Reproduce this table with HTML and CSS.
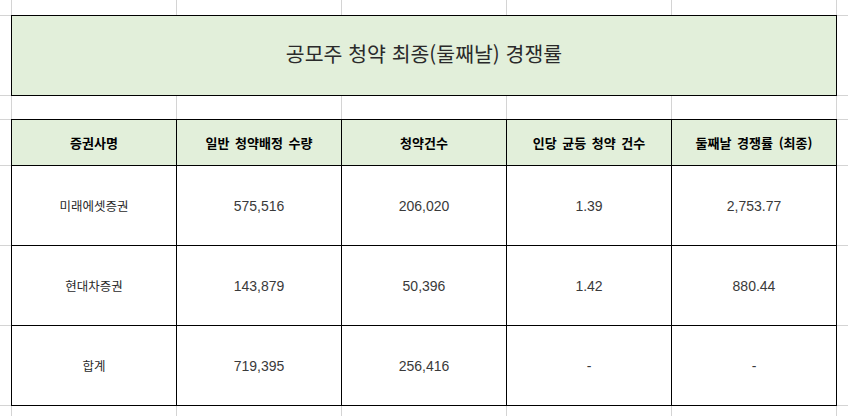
FILE: index.html
```html
<!DOCTYPE html>
<html lang="ko">
<head>
<meta charset="utf-8">
<title>공모주 청약 경쟁률</title>
<link rel="stylesheet" href="styles.css">
</head>
<body>
<div class="sheet">
  <div class="c"></div><div class="c"></div><div class="c"></div><div class="c"></div><div class="c"></div><div class="c"></div><div class="c"></div>

  <div class="c"></div>
  <div class="c title">공모주 청약 최종(둘째날) 경쟁률</div>
  <div class="c"></div>

  <div class="c"></div><div class="c"></div><div class="c"></div><div class="c"></div><div class="c"></div><div class="c"></div><div class="c"></div>

  <div class="c"></div>
  <div class="c th">증권사명</div>
  <div class="c th">일반 청약배정 수량</div>
  <div class="c th">청약건수</div>
  <div class="c th">인당 균등 청약 건수</div>
  <div class="c th">둘째날 경쟁률 (최종)</div>
  <div class="c"></div>

  <div class="c"></div>
  <div class="c td ko">미래에셋증권</div>
  <div class="c td">575,516</div>
  <div class="c td">206,020</div>
  <div class="c td">1.39</div>
  <div class="c td">2,753.77</div>
  <div class="c"></div>

  <div class="c"></div>
  <div class="c td ko">현대차증권</div>
  <div class="c td">143,879</div>
  <div class="c td">50,396</div>
  <div class="c td">1.42</div>
  <div class="c td">880.44</div>
  <div class="c"></div>

  <div class="c"></div>
  <div class="c td ko">합계</div>
  <div class="c td">719,395</div>
  <div class="c td">256,416</div>
  <div class="c td">-</div>
  <div class="c td">-</div>
  <div class="c"></div>

  <div class="c"></div><div class="c"></div><div class="c"></div><div class="c"></div><div class="c"></div><div class="c"></div><div class="c"></div>
</div>
</body>
</html>
```

FILE: styles.css
```css
html, body {
  margin: 0;
  padding: 0;
  background: #ffffff;
}

body {
  width: 848px;
  height: 416px;
  overflow: hidden;
  font-family: "Noto Sans CJK KR", "Liberation Sans", sans-serif;
  color: #111111;
}

.sheet {
  display: grid;
  grid-template-columns: 11px repeat(5, 164px) 11px;
  grid-template-rows: 15px 79px 23px 45px 79px 79px 79px 10px;
  gap: 1px;
  background: #d4d4d4;
  width: 848px;
  height: 416px;
}

.c {
  background: #ffffff;
  display: flex;
  align-items: center;
  justify-content: center;
  white-space: nowrap;
}

.title {
  grid-column: span 5;
  background: #e2efda;
  outline: 1px solid #000000;
  font-size: 20.5px;
  color: #2a2a2a;
  padding-bottom: 6px;
  box-sizing: border-box;
}

.th {
  background: #e2efda;
  outline: 1px solid #000000;
  font-weight: bold;
  font-size: 13px;
  word-spacing: 2px;
  color: #000000;
}

.td {
  outline: 1px solid #000000;
  font-family: "Liberation Sans", "Noto Sans CJK KR", sans-serif;
  font-size: 14px;
  color: #3a3a3a;
}

.ko {
  font-family: "Noto Sans CJK KR", "Liberation Sans", sans-serif;
  font-size: 12.5px;
  color: #2a2a2a;
}
```
